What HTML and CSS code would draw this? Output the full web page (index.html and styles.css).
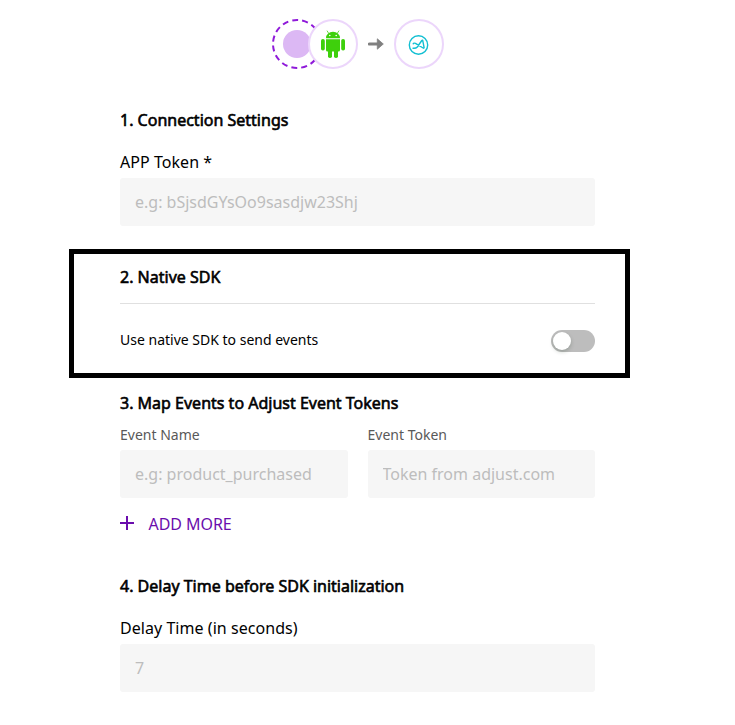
FILE: index.html
```
<!DOCTYPE html>
<html lang="en">
<head>
<meta charset="utf-8">
<title>Adjust connection</title>
<link rel="stylesheet" href="styles.css">
</head>
<body>
<header class="flow">
  <svg class="source" width="86" height="50" viewBox="0 0 86 50" aria-hidden="true">
    <circle cx="25" cy="25" r="24" fill="none" stroke="#8f1ad9" stroke-width="2" stroke-dasharray="6 4.05" stroke-dashoffset="3"/>
    <circle cx="25" cy="25" r="14" fill="#dcb8f4"/>
    <circle cx="61" cy="25" r="24" fill="#fff" stroke="#ecd6fb" stroke-width="2"/>
    <g fill="#3ed00c">
      <path d="M54 19.200a7 6.500 0 0 1 14 0z"/>
      <path d="M56.500 14l-1.300-2M65.500 14l1.300-2" stroke="#3ed00c" stroke-width=".8" stroke-linecap="round"/>
      <path d="M54 20.200h14V31a1.500 1.500 0 0 1-1.500 1.500h-11A1.500 1.500 0 0 1 54 31z"/>
      <rect x="49" y="20" width="3.800" height="11.500" rx="1.800"/>
      <rect x="69.200" y="20" width="3.800" height="11.500" rx="1.800"/>
      <rect x="56" y="30" width="4" height="9" rx="1.800"/>
      <rect x="62" y="30" width="4" height="9" rx="1.800"/>
    </g>
    <circle cx="57.800" cy="16.500" r=".8" fill="#fff"/>
    <circle cx="64.200" cy="16.500" r=".8" fill="#fff"/>
  </svg>
  <svg class="arrow" width="16" height="12" viewBox="0 0 16 12" aria-hidden="true">
    <path d="M1.500 6H10" stroke="#808080" stroke-width="3.200" stroke-linecap="round"/>
    <path d="M9.300 .8L15.300 6l-6 5.200z" fill="#808080" stroke="#808080" stroke-width=".8" stroke-linejoin="round"/>
  </svg>
  <svg width="50" height="50" viewBox="0 0 50 50" aria-hidden="true">
    <circle cx="25" cy="25" r="24" fill="#fff" stroke="#ecd6fb" stroke-width="2"/>
    <g fill="none" stroke="#12bfd2" stroke-width="1.400" stroke-linejoin="round" stroke-linecap="round">
      <circle cx="24.500" cy="26" r="9.200"/>
      <path d="M19 29.200q2.800.4 4.300-1.200l4.500-6.500q.7-.8 1 .3l1.300 6.800q0 1-1 .4L21.500 24.300q-2-.6-2.300.5"/>
    </g>
  </svg>
</header>
<main>
  <section class="connection">
    <h2>1. Connection Settings</h2>
    <label class="label" for="token">APP Token *</label>
    <input id="token" class="field" placeholder="e.g: bSjsdGYsOo9sasdjw23Shj">
  </section>
  <section class="native">
    <h2>2. Native SDK</h2>
    <div class="option">
      <span class="option-text">Use native SDK to send events</span>
      <span class="toggle" role="switch" aria-checked="false"></span>
    </div>
  </section>
  <section class="events">
    <h2>3. Map Events to Adjust Event Tokens</h2>
    <div class="columns">
      <div><label class="small" for="name">Event Name</label><input id="name" class="field" placeholder="e.g: product_purchased"></div>
      <div><label class="small" for="event">Event Token</label><input id="event" class="field" placeholder="Token from adjust.com"></div>
    </div>
    <button class="add" type="button">
      <svg width="14" height="14" viewBox="0 0 14 14" aria-hidden="true"><path d="M0 7h14M7 0v14" stroke="#6a0dad" stroke-width="2"/></svg>
      <span>ADD MORE</span>
    </button>
  </section>
  <section class="delay">
    <h2>4. Delay Time before SDK initialization</h2>
    <label class="label" for="delay">Delay Time (in seconds)</label>
    <input id="delay" class="field" placeholder="7">
  </section>
</main>
</body>
</html>
```
FILE: styles.css
```
* { box-sizing: border-box; }
body { margin: 0; background: #fff; color: #000; font: 16px/24px "Noto Sans", sans-serif; }
.flow { display: flex; align-items: center; height: 50px; margin: 19px 0 0 272px; }
.flow svg { display: block; }
.flow .arrow { margin: 0 10px; }
main { width: 561px; margin: 39px 0 0 69px; }
section { padding: 0 35px 0 51px; }
h2 { margin: 0; font-size: 16px; line-height: 24px; font-weight: 400; -webkit-text-stroke: .6px #000; white-space: nowrap; }
.label { display: block; margin-top: 18px; height: 28px; letter-spacing: .05px; }
.field { display: block; width: 100%; height: 48px; padding: 0 15px; border: 0; border-radius: 3px; background: #f6f6f6; font: inherit; }
.field::placeholder { color: #bdbdbd; opacity: 1; }
.native { height: 129px; margin-top: 23px; padding: 11px 30px 0 46px; border: 5px solid #000; }
.option { display: flex; justify-content: space-between; margin-top: 14px; padding-top: 26px; border-top: 1px solid #e0e0e0; }
.option-text { font-size: 14px; line-height: 20px; }
.toggle { display: flex; align-items: center; width: 44px; height: 22px; padding-left: 2px; border-radius: 11px; background: #bdbdbd; }
.toggle::before { content: ""; width: 18px; height: 18px; border-radius: 50%; background: #fff; box-shadow: 0 2px 4px rgba(0, 35, 11, .2); }
.events { margin-top: 13px; }
.columns { display: grid; grid-template-columns: 1fr 1fr; gap: 20px; margin-top: 10px; }
.small { display: block; height: 25px; font-size: 14px; line-height: 20px; color: #595959; }
.add { display: flex; align-items: center; gap: 14.500px; margin-top: 14px; height: 24px; padding: 0; border: 0; background: none; color: #6a0dad; font: inherit; letter-spacing: -.05px; }
.add svg { margin-bottom: 2px; }
.delay { margin-top: 38px; }
```
